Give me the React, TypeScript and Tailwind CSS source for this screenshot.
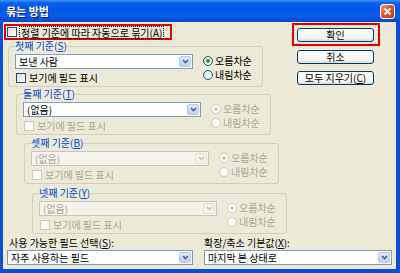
import React from "react";

function Check({ disabled = false }: { disabled?: boolean }) {
  return (
    <span
      className={`shrink-0 w-[10px] h-[10px] border ${
        disabled ? "border-[#CAC8BB] bg-white" : "border-[#1C5180] bg-[linear-gradient(135deg,#DCDCD7,#FFFFFF)]"
      }`}
    />
  );
}

function Radio({ checked = false, disabled = false }: { checked?: boolean; disabled?: boolean }) {
  return (
    <span
      className={`shrink-0 flex items-center justify-center w-[10px] h-[10px] rounded-full border ${
        disabled ? "border-[#CAC8BB] bg-white" : "border-[#1C5180] bg-[linear-gradient(135deg,#DCDCD7,#FFFFFF)]"
      }`}
    >
      {checked && (
        <span className={`w-[4px] h-[4px] rounded-full ${disabled ? "bg-[#CAC8BB]" : "bg-[#21A121]"}`} />
      )}
    </span>
  );
}

function Chevron({ disabled }: { disabled: boolean }) {
  return (
    <svg width="7" height="5" viewBox="0 0 7 5">
      <path d="M1 1 L3.5 3.5 L6 1" fill="none" stroke={disabled ? "#C9C7BA" : "#4D6185"} strokeWidth="1.6" />
    </svg>
  );
}

function Combo({ text, disabled = false, width }: { text: string; disabled?: boolean; width: string }) {
  return (
    <div
      className={`flex items-center h-[15px] border ${width} ${
        disabled ? "border-[#C9C7BA] bg-[#F3F2EC] text-[#ACA899]" : "border-[#7F9DB9] bg-white text-black"
      }`}
    >
      <span className="flex-1 pl-[3px] leading-[13px] whitespace-nowrap">{text}</span>
      <span
        className={`flex items-center justify-center w-[12px] h-[11px] mr-px rounded-[2px] border ${
          disabled
            ? "border-[#E2E0D6] bg-[#F2F1EB]"
            : "border-[#B5C8F2] bg-[linear-gradient(to_bottom,#DCE6FD,#BFD2F9)]"
        }`}
      >
        <Chevron disabled={disabled} />
      </span>
    </div>
  );
}

function Group({
  label,
  mnemonic,
  className,
  combo,
  enabled,
  comboEnabled,
}: {
  label: string;
  mnemonic: string;
  className: string;
  combo: string;
  enabled: boolean;
  comboEnabled: boolean;
}) {
  const tone = enabled ? "text-black" : "text-[#ACA899]";
  return (
    <fieldset className={`w-[255px] border border-[#D0D0BF] rounded-[3px] pl-[6px] pr-[4px] pt-[2px] pb-[2px] ${className}`}>
      <legend className="leading-[12px] text-[#0046D5] whitespace-nowrap">
        {label}(<u>{mnemonic}</u>)
      </legend>
      <div className="flex">
        <div className="flex flex-col w-[178px]">
          <Combo text={combo} disabled={!comboEnabled} width="w-[178px]" />
          <div className="flex items-center mt-[3px] h-[12px] ml-px gap-[3px]">
            <Check disabled={!enabled} />
            <span className={`leading-[12px] whitespace-nowrap ${tone}`}>보기에 필드 표시</span>
          </div>
        </div>
        <div className="flex flex-col ml-[10px]">
          <div className="flex items-center h-[14px] gap-[2px]">
            <Radio checked disabled={!enabled} />
            <span className={`leading-[12px] whitespace-nowrap ${tone}`}>오름차순</span>
          </div>
          <div className="flex items-center h-[14px] gap-[2px]">
            <Radio disabled={!enabled} />
            <span className={`leading-[12px] whitespace-nowrap ${tone}`}>내림차순</span>
          </div>
        </div>
      </div>
    </fieldset>
  );
}

function XpButton({ children }: { children: React.ReactNode }) {
  return (
    <button className="w-[77px] h-[14px] rounded-[3px] border border-[#003C74] bg-[linear-gradient(to_bottom,#FFFFFF,#F4F4F0_80%,#D8D4C8)] leading-[12px] text-black whitespace-nowrap">
      {children}
    </button>
  );
}

export default function App() {
  return (
    <div className="w-[400px] h-[273px] flex flex-col bg-[#0B4FD7] text-[10px] font-['Noto_Sans_CJK_KR',sans-serif] overflow-hidden">
      {/* Title bar */}
      <div className="h-[22px] shrink-0 flex items-center justify-between pl-[6px] pr-[5px] bg-[linear-gradient(to_bottom,#3D95FF_0%,#0A5FEA_14%,#0058E6_45%,#0A5CE8_75%,#0046C8_100%)]">
        <span className="text-white font-bold text-[11px] leading-[14px] [text-shadow:1px_1px_#0F1F8A]">묶는 방법</span>
        <span className="flex items-center justify-center w-[15px] h-[15px] rounded-[3px] border border-white bg-[linear-gradient(135deg,#F2A08A,#E1502E_45%,#C43A18)]">
          <svg width="9" height="9" viewBox="0 0 9 9">
            <path d="M1.5 1.5 L7.5 7.5 M7.5 1.5 L1.5 7.5" stroke="white" strokeWidth="1.8" />
          </svg>
        </span>
      </div>

      {/* Body */}
      <div className="flex-1 flex flex-col ml-[3px] mr-[4px] mb-[4px] bg-[#ECE9D8] text-black">
        <div className="flex">
          {/* Left column */}
          <div className="w-[289px] flex flex-col">
            <div className="ml-px mt-[2px] w-[168px] h-[16px] border-2 border-[#E00000] flex items-center pl-px gap-[2px]">
              <Check />
              <span className="leading-[11px] border border-dotted border-black px-px whitespace-nowrap">
                정렬 기준에 따라 자동으로 묶기(<u>A</u>)
              </span>
            </div>
            <Group label="첫째 기준" mnemonic="S" className="ml-[5px]" combo="보낸 사람" enabled comboEnabled />
            <Group label="둘째 기준" mnemonic="T" className="ml-[13px] mt-px" combo="(없음)" enabled={false} comboEnabled />
            <Group label="셋째 기준" mnemonic="B" className="ml-[21px] mt-[2px]" combo="(없음)" enabled={false} comboEnabled={false} />
            <Group label="넷째 기준" mnemonic="Y" className="ml-[29px] mt-[3px]" combo="(없음)" enabled={false} comboEnabled={false} />
          </div>

          {/* Right column */}
          <div className="flex flex-col">
            <div className="mt-px w-[88px] border-2 border-[#E00000] px-[3px] py-[2px]">
              <XpButton>확인</XpButton>
            </div>
            <div className="mt-[3px] pl-[5px]">
              <XpButton>취소</XpButton>
            </div>
            <div className="mt-[6px] pl-[5px]">
              <XpButton>
                모두 지우기(<u>C</u>)
              </XpButton>
            </div>
          </div>
        </div>

        {/* Bottom */}
        <div className="flex mt-[3px]">
          <div className="ml-[4px] w-[186px] flex flex-col">
            <span className="pl-[2px] leading-[12px] whitespace-nowrap">
              사용 가능한 필드 선택(<u>S</u>):
            </span>
            <div className="mt-px">
              <Combo text="자주 사용하는 필드" width="w-[186px]" />
            </div>
          </div>
          <div className="ml-[11px] w-[188px] flex flex-col">
            <span className="leading-[12px] whitespace-nowrap">
              확장/축소 기본값(<u>X</u>):
            </span>
            <div className="mt-px">
              <Combo text="마지막 본 상태로" width="w-[188px]" />
            </div>
          </div>
        </div>
      </div>
    </div>
  );
}
